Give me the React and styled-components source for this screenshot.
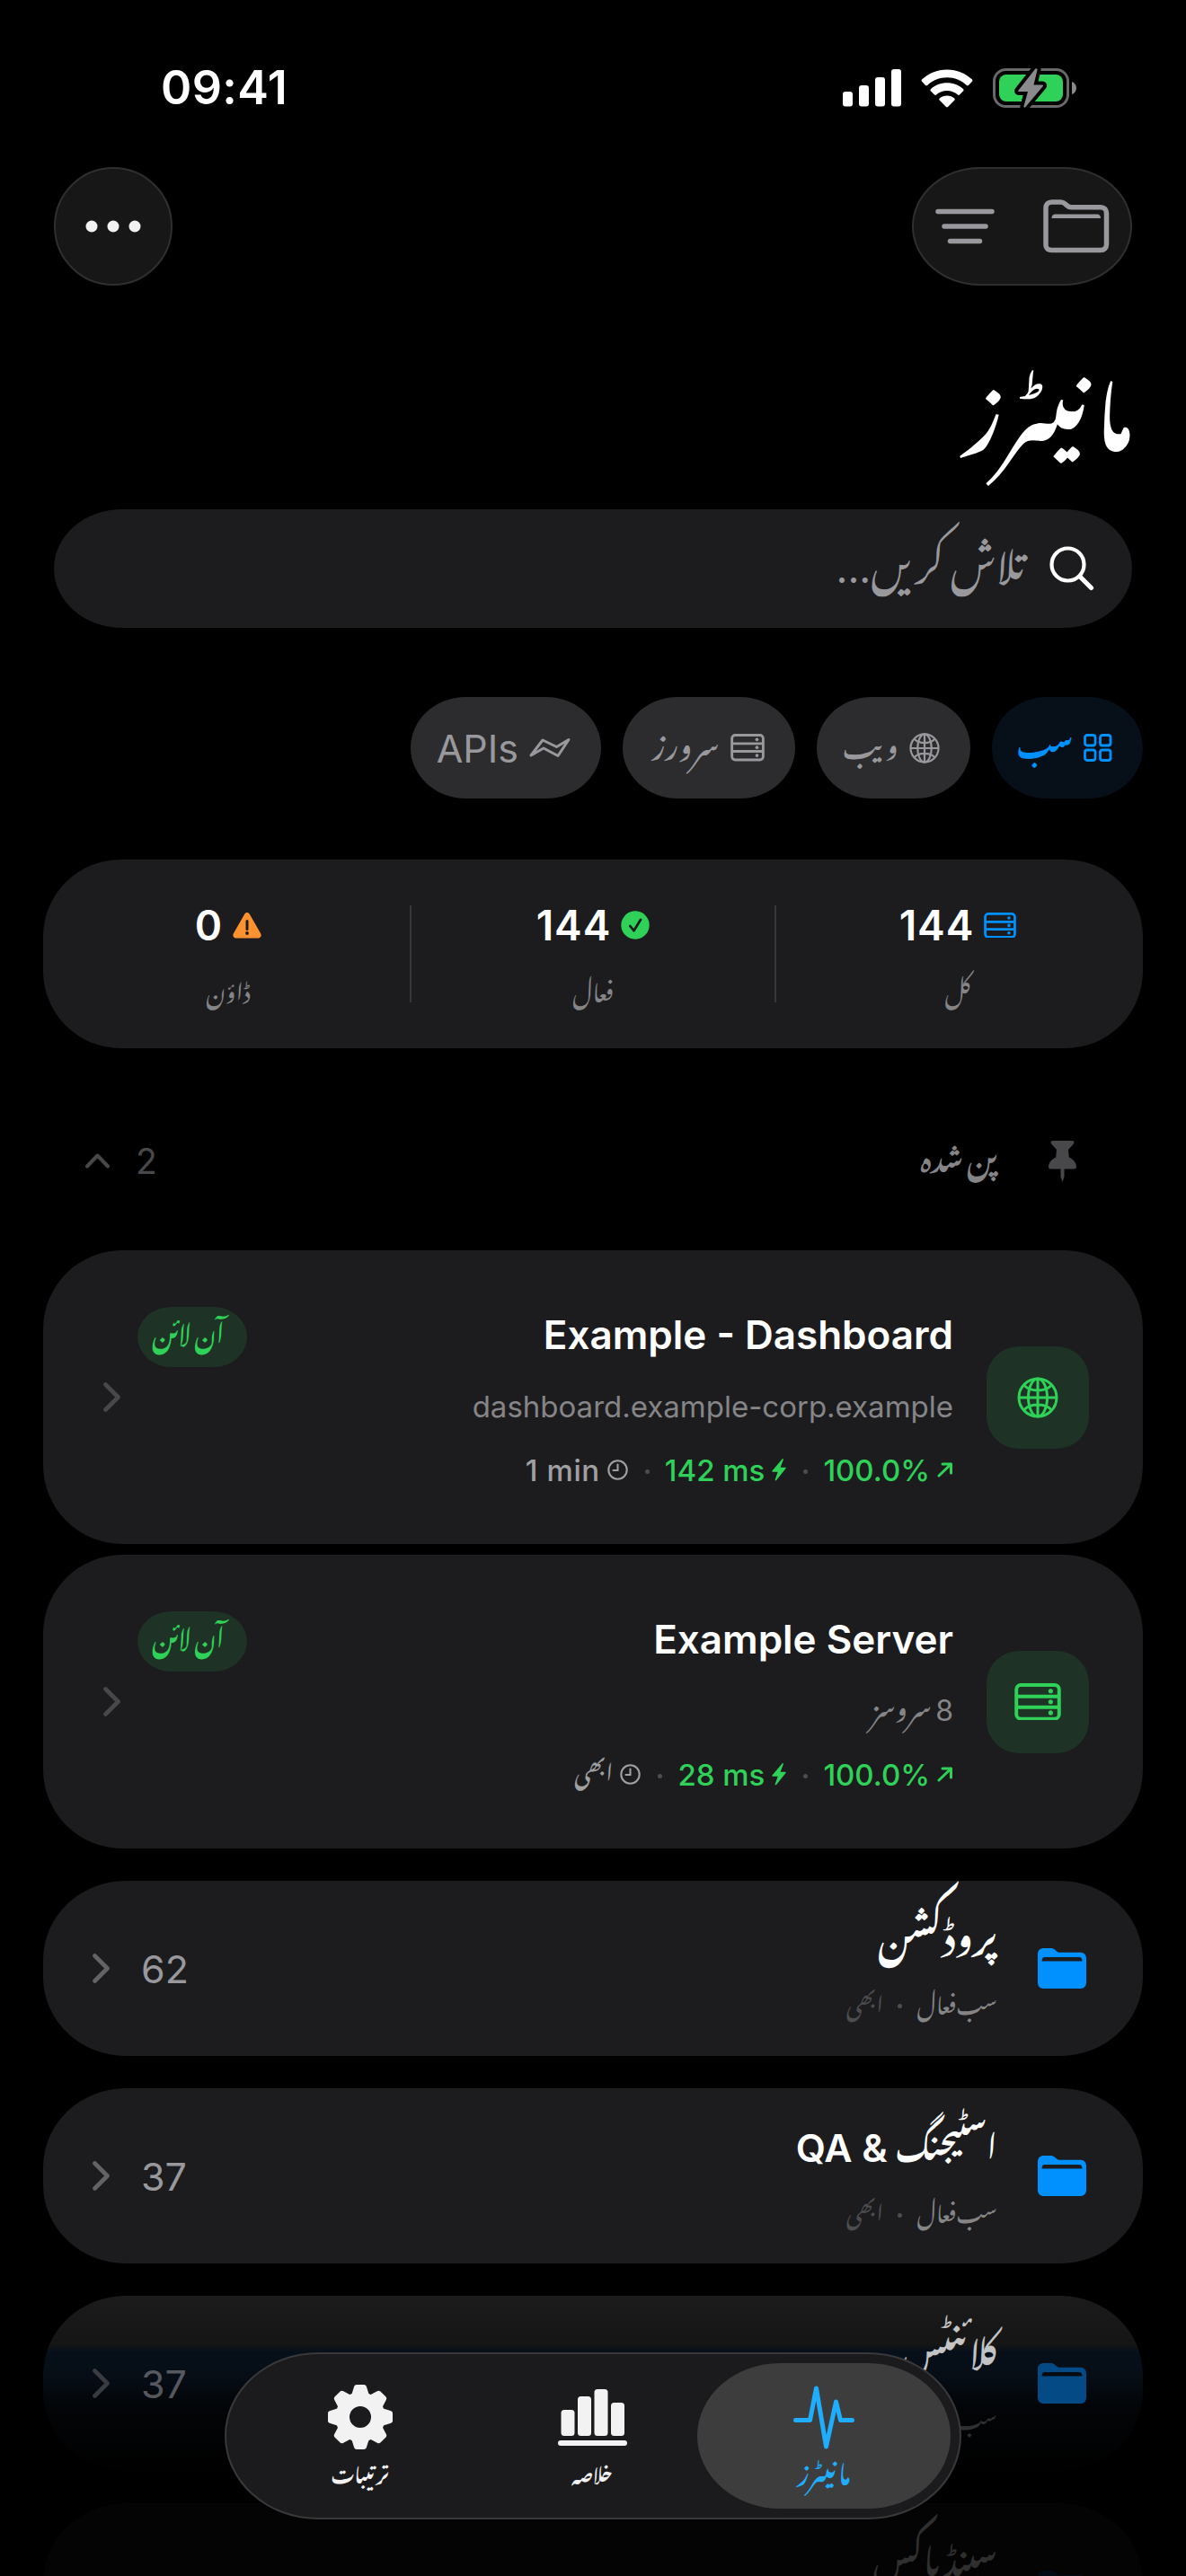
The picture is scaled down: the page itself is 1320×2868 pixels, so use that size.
import React from 'react';
import styled, { createGlobalStyle } from 'styled-components';

const GlobalStyle = createGlobalStyle`
  * {
    box-sizing: border-box;
  }

  body {
    margin: 0;
    background: #000;
    font-family: Inter, 'Noto Nastaliq Urdu', 'DejaVu Sans', sans-serif;
    color: #fff;
  }

  svg {
    display: block;
    flex: none;
  }
`;

const Screen = styled.div`
  position: relative;
  width: 1320px;
  height: 2868px;
  overflow: hidden;
  background: #000;
`;

const Text = styled.span`
  display: block;
  flex: none;
  width: fit-content;
  font-size: ${(p) => p.$size}px;
  line-height: ${(p) => p.$line || 60}px;
  font-weight: ${(p) => p.$weight || 400};
  letter-spacing: ${(p) => p.$spacing || 0}px;
  word-spacing: ${(p) => p.$words || 0}px;
  color: ${(p) => p.$color || '#fff'};
  opacity: ${(p) => p.$opacity};
  white-space: nowrap;
`;

const StatusBar = styled.header`
  display: flex;
  align-items: center;
  justify-content: space-between;
  height: 186px;
  padding: 10px 122px 0 179px;
`;

const StatusIcons = styled.div`
  display: flex;
  align-items: center;
  gap: 22px;
`;

const TopBar = styled.div`
  display: flex;
  justify-content: space-between;
  padding: 0 60px;
`;

const GlassButton = styled.div`
  display: flex;
  align-items: center;
  justify-content: center;
  gap: ${(p) => p.$gap || 0}px;
  width: ${(p) => p.$width}px;
  height: 132px;
  border: 2px solid #2f2f31;
  border-radius: ${(p) => p.$radius};
  background: #171717;
`;

const PageTitle = styled.h1`
  height: 249px;
  margin: 0;
  padding: 104px 59px 0;
  font-size: 86px;
  line-height: 100px;
  font-weight: 700;
`;

const SearchField = styled.div`
  display: flex;
  align-items: center;
  gap: 27px;
  height: 132px;
  margin: 0 60px;
  padding: 0 42px;
  border-radius: 76px / 66px;
  background: #1c1c1e;
`;

const Chips = styled.div`
  display: flex;
  gap: 24px;
  margin-top: 77px;
  padding: 0 48px;
`;

const Chip = styled.div`
  display: flex;
  align-items: center;
  gap: 12px;
  width: ${(p) => p.$width}px;
  height: 113px;
  padding: 0 34px;
  border-radius: 62px / 57px;
  background: ${(p) => (p.$active ? '#070f18' : '#2c2c2e')};
  color: ${(p) => (p.$active ? '#0091ff' : '#98989d')};
`;

const Stats = styled.section`
  display: flex;
  height: 210px;
  margin: 68px 48px 0;
  padding: 51px 4px;
  border-radius: 86px;
  background: #1c1c1e;
`;

const Stat = styled.div`
  display: flex;
  flex: 1;
  flex-direction: column;
  align-items: center;
  gap: 33px;

  & + & {
    border-right: 2px solid #38383a;
  }
`;

const StatValue = styled.div`
  display: flex;
  align-items: center;
  gap: 11px;
  height: 44px;
`;

const SectionHeader = styled.div`
  display: flex;
  align-items: center;
  gap: 57px;
  height: 225px;
  padding: 26px 122px 0 95px;
`;

const SectionCount = styled.div`
  display: flex;
  align-items: center;
  gap: 29px;
  margin-right: auto;
`;

const CardList = styled.div`
  display: flex;
  flex-direction: column;
  gap: ${(p) => p.$gap}px;
  margin: ${(p) => p.$top || 0}px 48px 0;
`;

const MonitorCard = styled.article`
  display: flex;
  align-items: center;
  height: 327px;
  padding: 0 60px 0 67px;
  border-radius: 88px;
  background: #1c1c1e;
`;

const IconTile = styled.div`
  display: flex;
  align-items: center;
  justify-content: center;
  width: 114px;
  height: 114px;
  border-radius: 36px;
  background: #1f3226;
  color: #30d158;
`;

const MonitorBody = styled.div`
  flex: 1;
  align-self: flex-start;
  margin: 58px 37px 0 19px;
`;

const MonitorHeading = styled.div`
  display: flex;
  align-items: center;
  justify-content: space-between;
  height: 76px;
`;

const MonitorName = styled(Text)`
  padding-bottom: 4px;
`;

const Badge = styled.div`
  display: flex;
  align-items: center;
  justify-content: center;
  width: 122px;
  height: 67px;
  padding-right: 9px;
  border-radius: 38px / 34px;
  background: #1f3226;
`;

const MetricRow = styled.div`
  display: flex;
  align-items: center;
  height: 61px;
`;

const Metric = styled.div`
  display: flex;
  align-items: center;
  gap: 8px;
  color: ${(p) => p.$color};
`;

const Dot = styled.i`
  flex: none;
  width: 5px;
  height: 5px;
  margin: ${(p) => p.$margin || '4px 17px 0 19px'};
  border-radius: 50%;
  background: #4d4d50;
`;

const GroupCard = styled.article`
  display: flex;
  align-items: center;
  height: 195px;
  padding: 0 63px 0 55px;
  border-radius: 92px / 88px;
  background: ${(p) => p.$background || '#1c1c1e'};
`;

const GroupBody = styled.div`
  flex: 1;
  margin-right: 45px;
  padding-top: 8px;
`;

const GroupStatus = styled.div`
  display: flex;
  align-items: center;
  height: 69px;
  opacity: ${(p) => p.$opacity};
`;

const GroupCount = styled.div`
  display: flex;
  align-items: center;
  gap: 35px;
  opacity: ${(p) => p.$opacity};
`;

const Latin = styled.span`
  font-size: 43px;
`;

const TabBar = styled.nav`
  position: absolute;
  left: 250px;
  bottom: 63px;
  display: flex;
  width: 820px;
  height: 186px;
  padding: 10px;
  border: 2px solid #39393b;
  border-radius: 104px / 93px;
  background: #1b1b1d;
`;

const Tab = styled.div`
  display: flex;
  flex: none;
  flex-direction: column;
  align-items: center;
  width: ${(p) => (p.$active ? 282 : 258)}px;
  height: 162px;
  margin-left: ${(p) => (p.$active ? -12 : 0)}px;
  padding-top: 24px;
  border-radius: 92px / 81px;
  background: ${(p) => (p.$active ? '#3d3d3d' : 'transparent')};
  color: ${(p) => (p.$active ? '#1fadff' : '#f2f2f2')};
`;

const TabIcon = styled.div`
  display: flex;
  align-items: center;
  height: 72px;
`;

const SignalIcon = () => (
  <svg width="65" height="42" viewBox="0 0 65 42" fill="#fff">
    <rect x="0" y="25" width="11" height="16.5" rx="3" />
    <rect x="18" y="18" width="11" height="23.5" rx="3" />
    <rect x="36" y="9" width="11" height="32.5" rx="3" />
    <rect x="54" y="0" width="11" height="41.5" rx="3" />
  </svg>
);

const WifiIcon = () => (
  <svg width="58" height="43" viewBox="0 0 58 43" fill="#fff">
    <path d="M29 0.5c11 0 20.800 4.200 28 11.100.6.600.6 1.400.1 2l-4.200 4.300c-.6.600-1.400.600-2 .1C45 12.500 37.400 9.300 29 9.300S13 12.500 7.100 18c-.6.500-1.400.500-2-.1L.9 13.600c-.5-.6-.5-1.400.1-2C8.200 4.700 18 .5 29 .5Z" />
    <path d="M29 15.300c7 0 13.300 2.600 18.100 6.900.6.500.6 1.400.1 2l-4.300 4.300c-.5.600-1.400.600-2 .1-3.200-2.800-7.300-4.500-11.900-4.500s-8.700 1.700-11.900 4.500c-.6.500-1.500.500-2-.1l-4.300-4.300c-.5-.6-.5-1.500.1-2 4.800-4.300 11.100-6.900 18.100-6.900Z" />
    <path d="M29 29.600c3.200 0 6 1.100 8.300 3 .6.500.6 1.400.1 2l-7.400 7.500c-.6.600-1.400.600-2 0l-7.400-7.500c-.5-.6-.5-1.500.1-2 2.300-1.900 5.100-3 8.300-3Z" />
  </svg>
);

const BatteryIcon = () => (
  <svg width="93" height="46" viewBox="0 0 93 46">
    <rect x="1.500" y="2.500" width="82" height="41" rx="13" fill="none" stroke="#69696b" strokeWidth="3" />
    <rect x="7" y="8" width="71" height="30" rx="8" fill="#30d158" />
    <path d="M88 16c3 1 5 3.700 5 7s-2 6-5 7Z" fill="#8a8a8d" />
    <path
      d="M47 2 28.500 25.500c-.6.800-.3 1.500.7 1.500H39l-4.500 16c-.4 1.700 1 2.300 2 1L55.800 21c.6-.8.3-1.600-.7-1.600H45.500L49.500 3c.4-1.700-1.500-2.300-2.500-1Z"
      fill="#8a8a8d"
      stroke="#000"
      strokeWidth="8"
      strokeLinejoin="round"
      paintOrder="stroke"
    />
  </svg>
);

const EllipsisIcon = () => (
  <svg width="62" height="14" viewBox="0 0 62 14" fill="#f2f2f2">
    <circle cx="7" cy="7" r="6.500" />
    <circle cx="31" cy="7" r="6.500" />
    <circle cx="55" cy="7" r="6.500" />
  </svg>
);

const FilterIcon = () => (
  <svg width="66" height="40" viewBox="0 0 66 40" stroke="#98989d" strokeWidth="5.500" strokeLinecap="round">
    <path d="M3 3.500h60M10 20h46M16.500 36.500h33" />
  </svg>
);

const FolderOutlineIcon = () => (
  <svg width="74" height="60" viewBox="0 0 74 60" fill="none" stroke="#98989d" strokeWidth="5.500">
    <path d="M3 51V9.500C3 5.500 5.500 3 9.500 3h10c2 0 3.600.6 5 1.900l2.400 2.200c1.300 1.200 2.700 1.700 4.500 1.700H64c4 0 6.500 2.500 6.500 6.500V50c0 4-2.500 6.500-6.500 6.500H9.500C5.500 56.500 3 54.500 3 51Z" />
    <path d="M9.500 21c0-3 1.500-4.500 4-4.500h46.500c2.500 0 4 1.500 4 4.500Z" fill="#98989d" stroke="none" />
  </svg>
);

const SearchIcon = () => (
  <svg width="50" height="50" viewBox="0 0 50 50" fill="none" stroke="#fff" strokeLinecap="round">
    <circle cx="20.500" cy="20.500" r="18" strokeWidth="4.200" />
    <path d="m34 34 12.500 12.500" strokeWidth="5.200" />
  </svg>
);

const GridIcon = () => (
  <svg width="32" height="31" viewBox="0 0 32 31" fill="none" stroke="currentColor" strokeWidth="2.800">
    <rect x="1.500" y="1.500" width="11.500" height="11.500" rx="2.500" />
    <rect x="18.500" y="1.500" width="11.500" height="11.500" rx="2.500" />
    <rect x="1.500" y="18" width="11.500" height="11.500" rx="2.500" />
    <rect x="18.500" y="18" width="11.500" height="11.500" rx="2.500" />
  </svg>
);

const GlobeIcon = ({ size }) => (
  <svg width={size} height={size} viewBox="0 0 46 46" fill="none" stroke="currentColor" strokeWidth="3">
    <circle cx="23" cy="23" r="21" />
    <ellipse cx="23" cy="23" rx="10.500" ry="21" />
    <path d="M23 2v42M2 23h42M8 9.500c3.500 3.600 8.800 5.500 15 5.500s11.500-1.900 15-5.500M8 36.500c3.500-3.600 8.800-5.500 15-5.500s11.500 1.900 15 5.500" />
  </svg>
);

const ServerIcon = ({ width }) => (
  <svg width={width} height={width * 0.8} viewBox="0 0 52 42" fill="none" stroke="currentColor" strokeWidth="4">
    <rect x="2" y="2" width="48" height="38" rx="5" />
    <path d="M2 15h48M2 27h48" />
    <g fill="currentColor" stroke="none">
      <circle cx="40.500" cy="8.800" r="2.600" />
      <circle cx="40.500" cy="21" r="2.600" />
      <circle cx="40.500" cy="33.200" r="2.600" />
    </g>
  </svg>
);

const ApiIcon = () => (
  <svg width="46" height="23" viewBox="0 0 46 23" fill="none" stroke="currentColor" strokeWidth="3" strokeLinejoin="round">
    <path d="M2 20 15 3l15.500 7.500L44 2.500 32 20.500 16 12 2 20Z" />
  </svg>
);

const CheckIcon = () => (
  <svg width="32" height="32" viewBox="0 0 32 32">
    <circle cx="16" cy="16" r="15.700" fill="#30d158" />
    <path d="m10.300 17 4.200 5.200 7.600-12.400" fill="none" stroke="#1c1c1e" strokeWidth="2.700" strokeLinecap="round" strokeLinejoin="round" />
  </svg>
);

const WarningIcon = () => (
  <svg width="32" height="29" viewBox="0 0 32 29">
    <path d="M13.200 1.800c1.300-2.300 4.300-2.300 5.600 0l12.300 21.500c1.400 2.500-.1 5.200-2.900 5.200H3.800c-2.800 0-4.300-2.700-2.900-5.200Z" fill="#ff9230" />
    <path d="M16 9.500v9" stroke="#1c1c1e" strokeWidth="3" strokeLinecap="round" />
    <circle cx="16" cy="23" r="1.900" fill="#1c1c1e" />
  </svg>
);

const PinIcon = () => (
  <svg width="31" height="46" viewBox="0 0 31 46" fill="#48484a">
    <path d="M5 0h21c2.600 0 3 2.200 1.500 4L22 10l.8 8.500c5 2.300 8.200 6.300 8.200 10.500 0 1.600-.9 2.500-2.500 2.500h-26C.9 31.500 0 30.600 0 29c0-4.200 3.200-8.200 8.200-10.500L9 10 3.500 4C2 2.200 2.400 0 5 0Z" />
    <path d="M13.500 31h4v9L15.500 46l-2-6Z" />
  </svg>
);

const ChevronUpIcon = () => (
  <svg width="27" height="17" viewBox="0 0 27 17" fill="none" stroke="#48484a" strokeWidth="4" strokeLinecap="round" strokeLinejoin="round">
    <path d="M2 14.500 13.500 2.500 25 14.500" />
  </svg>
);

const ChevronIcon = ({ color = '#48484a' }) => (
  <svg width="19" height="33" viewBox="0 0 19 33" fill="none" stroke={color} strokeWidth="4.600" strokeLinecap="round" strokeLinejoin="round">
    <path d="M2.500 2.500 16.500 16.500 2.500 30.500" />
  </svg>
);

const ArrowIcon = () => (
  <svg width="18" height="17" viewBox="0 0 18 17" fill="none" stroke="currentColor" strokeWidth="3" strokeLinecap="round" strokeLinejoin="round">
    <path d="M2 15 15.500 2M6 2h9.500v10" />
  </svg>
);

const BoltIcon = () => (
  <svg width="16" height="25" viewBox="0 0 16 25" fill="currentColor">
    <path d="M11.500.5.500 13.500c-.5.600-.2 1.300.5 1.300h5.700L3.700 23.300c-.4 1.200.7 1.700 1.400.8L15.500 11c.5-.6.200-1.300-.5-1.300H9.600L12.800 1.300c.4-1.100-.6-1.600-1.300-.8Z" />
  </svg>
);

const ClockIcon = () => (
  <svg width="23" height="23" viewBox="0 0 23 23" fill="none" stroke="currentColor" strokeWidth="2.100" strokeLinecap="round">
    <circle cx="11.500" cy="11.500" r="10.200" />
    <path d="M11.500 5.500v6.500H6.500" />
  </svg>
);

const FolderIcon = ({ color = '#0091ff', slot = '#1c1c1e' }) => (
  <svg width="54" height="45" viewBox="0 0 54 45">
    <path d="M0 7C0 2.500 2.500 0 7 0h7c2.200 0 3.700.5 5.300 1.900l1.500 1.300c1.300 1.100 2.300 1.500 4.200 1.500h22c4.500 0 7 2.500 7 7V38c0 4.500-2.500 7-7 7H7c-4.500 0-7-2.500-7-7Z" fill={color} />
    <path d="M4.500 14.500c0-2.500 1-4.500 3.500-4.500h38c2.500 0 3.500 2 3.500 4.500Z" fill={slot} />
  </svg>
);

const GearIcon = () => (
  <svg width="72" height="72" viewBox="-36 -36 72 72">
    <circle r="19.800" fill="none" stroke="currentColor" strokeWidth="15.600" />
    {[0, 45, 90, 135, 180, 225, 270, 315].map((angle) => (
      <path
        key={angle}
        d="M-10-24-7-33.500c.4-1.600 1.300-2.500 3-2.500h8c1.700 0 2.600.9 3 2.500L10-24Z"
        transform={`rotate(${angle})`}
        fill="currentColor"
      />
    ))}
  </svg>
);

const ChartIcon = () => (
  <svg width="77" height="63" viewBox="0 0 77 63" fill="currentColor">
    <rect x="3.500" y="23" width="15" height="29" rx="3.500" />
    <rect x="22" y="8" width="15" height="44" rx="3.500" />
    <rect x="40.500" y="0" width="15" height="52" rx="3.500" />
    <rect x="59" y="15" width="15" height="37" rx="3.500" />
    <rect x="0" y="57" width="77" height="6" rx="3" />
  </svg>
);

const PulseIcon = () => (
  <svg width="68" height="71" viewBox="0 0 68 71" fill="none" stroke="currentColor" strokeWidth="5" strokeLinecap="round" strokeLinejoin="round">
    <path d="M2.500 38.500h16L25.500 3l11 65L47.500 18l5 20.500h13" />
  </svg>
);

const filters = [
  { label: 'سب', icon: <GridIcon />, width: 168, size: 31, active: true },
  { label: 'ویب', icon: <GlobeIcon size={34} />, width: 171, size: 33 },
  { label: 'سرورز', icon: <ServerIcon width={38} />, width: 192, size: 36 },
  { label: 'APIs', icon: <ApiIcon />, width: 212, size: 43 },
];

const stats = [
  { value: '144', label: 'کل', icon: <ServerIcon width={36} />, color: '#0091ff' },
  { value: '144', label: 'فعال', icon: <CheckIcon /> },
  { value: '0', label: 'ڈاؤن', icon: <WarningIcon /> },
];

const monitors = [
  {
    name: 'Example - Dashboard',
    detail: <Text dir="ltr" $size={33} $line={80} $color="#858588">dashboard.example-corp.example</Text>,
    icon: <GlobeIcon size={46} />,
    latency: '142 ms',
    checked: <Text dir="ltr" $size={33} $weight={500} $spacing={0.6} $color="#a0a0a3">1 min</Text>,
  },
  {
    name: 'Example Server',
    detail: <Text $size={32} $line={80} $words={-5} $color="#858588">8 سروسز</Text>,
    icon: <ServerIcon width={52} />,
    latency: '28 ms',
    checked: <Text $size={25} $weight={500} $color="#a0a0a3">ابھی</Text>,
  },
];

const groups = [
  { name: 'پروڈکشن', size: 42, count: 62 },
  { name: <>اسٹیجنگ <Latin>&amp; QA</Latin></>, size: 36, count: 37 },
  {
    name: 'کلائنٹس',
    size: 40,
    count: 37,
    background: 'linear-gradient(#1b1b1b, #171717 40px, #161616 54px, #07101a 62px, #060d15 90px, #020406 130px, #010101)',
    nameOpacity: 0.75,
    statusOpacity: 0.35,
    countOpacity: 0.55,
    folder: '#044a85',
    slot: '#060b11',
  },
  {
    name: 'سینڈباکس',
    size: 38,
    count: 8,
    background: '#040404',
    nameOpacity: 0.17,
    statusOpacity: 0.1,
    countOpacity: 0.1,
    folder: '#020a14',
    slot: '#040404',
  },
];

const tabs = [
  { label: 'مانیٹرز', icon: <PulseIcon />, size: 27, active: true },
  { label: 'خلاصہ', icon: <ChartIcon />, size: 21 },
  { label: 'ترتیبات', icon: <GearIcon />, size: 21 },
];

const App = () => (
  <Screen dir="rtl" lang="ur">
    <GlobalStyle />
    <StatusBar dir="ltr">
      <Text $size={52} $weight={600} $spacing={0.4}>09:41</Text>
      <StatusIcons>
        <SignalIcon />
        <WifiIcon />
        <BatteryIcon />
      </StatusIcons>
    </StatusBar>

    <TopBar>
      <GlassButton $width={245} $gap={54} $radius="76px / 66px">
        <FolderOutlineIcon />
        <FilterIcon />
      </GlassButton>
      <GlassButton $width={132} $radius="50%">
        <EllipsisIcon />
      </GlassButton>
    </TopBar>

    <PageTitle>مانیٹرز</PageTitle>

    <SearchField>
      <SearchIcon />
      <Text $size={45} $words={-6} $color="#98989d">تلاش کریں...</Text>
    </SearchField>

    <Chips>
      {filters.map((filter) => (
        <Chip key={filter.label} $width={filter.width} $active={filter.active}>
          {filter.icon}
          <Text $size={filter.size} $line={64} $color="inherit" $weight={filter.active ? 700 : 400}>{filter.label}</Text>
        </Chip>
      ))}
    </Chips>

    <Stats>
      {stats.map((stat) => (
        <Stat key={stat.label}>
          <StatValue style={{ color: stat.color }}>
            {stat.icon}
            <Text $size={46} $weight={600} $spacing={1}>{stat.value}</Text>
          </StatValue>
          <Text $size={26} $line={44} $color="#858588">{stat.label}</Text>
        </Stat>
      ))}
    </Stats>

    <SectionHeader>
      <PinIcon />
      <Text $size={33} $weight={600} $words={-4} $color="#858588">پن شدہ</Text>
      <SectionCount>
        <Text $size={39} $color="#48484a">2</Text>
        <ChevronUpIcon />
      </SectionCount>
    </SectionHeader>

    <CardList $gap={12}>
      {monitors.map((monitor) => (
        <MonitorCard key={monitor.name}>
          <IconTile>{monitor.icon}</IconTile>
          <MonitorBody>
            <MonitorHeading>
              <MonitorName dir="ltr" $size={44} $weight={600}>{monitor.name}</MonitorName>
              <Badge>
                <Text $size={28} $weight={700} $words={-3} $color="#30d158">آن لائن</Text>
              </Badge>
            </MonitorHeading>
            {monitor.detail}
            <MetricRow>
              <Metric $color="#30d158">
                <ArrowIcon />
                <Text dir="ltr" $size={33} $weight={500} $color="inherit">100.0%</Text>
              </Metric>
              <Dot />
              <Metric $color="#30d158">
                <BoltIcon />
                <Text dir="ltr" $size={33} $weight={500} $color="inherit">{monitor.latency}</Text>
              </Metric>
              <Dot />
              <Metric $color="#a0a0a3">
                <ClockIcon />
                {monitor.checked}
              </Metric>
            </MetricRow>
          </MonitorBody>
          <ChevronIcon />
        </MonitorCard>
      ))}
    </CardList>

    <CardList $gap={36} $top={36}>
      {groups.map((group, index) => (
        <GroupCard key={index} $background={group.background}>
          <FolderIcon color={group.folder} slot={group.slot} />
          <GroupBody>
            <Text $size={group.size} $weight={600} $line={76} $opacity={group.nameOpacity}>{group.name}</Text>
            <GroupStatus $opacity={group.statusOpacity}>
              <Text $size={25} $words={-7} $color="#858588">سب فعال</Text>
              <Dot $margin="0 16px" />
              <Text $size={25} $color="#4d4d50">ابھی</Text>
            </GroupStatus>
          </GroupBody>
          <GroupCount $opacity={group.countOpacity}>
            <Text $size={43} $color="#98989d">{group.count}</Text>
            <ChevronIcon color="#636366" />
          </GroupCount>
        </GroupCard>
      ))}
    </CardList>

    <TabBar>
      {tabs.map((tab) => (
        <Tab key={tab.label} $active={tab.active}>
          <TabIcon>{tab.icon}</TabIcon>
          <Text $size={tab.size} $weight={700} $line={62} $color="inherit">{tab.label}</Text>
        </Tab>
      ))}
    </TabBar>
  </Screen>
);

export default App;
